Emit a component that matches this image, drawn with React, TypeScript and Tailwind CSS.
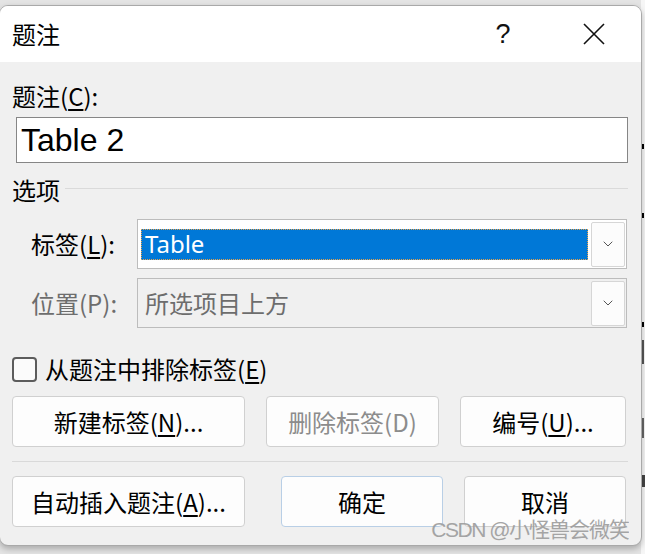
import { ChevronDown } from 'lucide-react';

const cjk = { fontFamily: '"Noto Sans CJK SC", "Noto Sans", sans-serif' };

function Btn({ children, w, disabled, primary }: { children: React.ReactNode; w: string; disabled?: boolean; primary?: boolean }) {
  return (
    <div
      className={`${w} h-[51px] flex items-center justify-center rounded-[4px] border bg-[#fdfdfd] text-[24px] leading-none ${
        primary ? 'border-[#b9cfe6]' : 'border-[#d0d0d0]'
      } ${disabled ? 'text-[#8c8c8c]' : 'text-black'}`}
    >
      {children}
    </div>
  );
}

function Combo({ disabled, children }: { disabled?: boolean; children: React.ReactNode }) {
  return (
    <div
      className={`w-[490px] h-[50px] flex items-center border border-[#bcbcbc] pl-[3px] pr-[1px] ${
        disabled ? 'bg-[#f0f0f0]' : 'bg-white'
      }`}
    >
      <div className="flex-1 h-full flex items-center">{children}</div>
      <div className="w-[34px] h-[45px] ml-[3px] flex items-center justify-center rounded-[2px] border border-[#d6d6d6] bg-[#fcfcfc]">
        <ChevronDown size={16} strokeWidth={1.5} className="text-[#555]" />
      </div>
    </div>
  );
}

export default function App() {
  return (
    <div className="relative w-[645px] h-[554px] overflow-hidden bg-[#e4e4e4]" style={cjk}>
      {/* backdrop fragments on the right */}
      <div className="absolute right-0 top-0 w-[4px] h-full bg-[#f6f6f6]" />
      <div className="absolute right-[1px] top-[144px] w-[3px] h-[5px] bg-black" />
      <div className="absolute right-[1px] top-[213px] w-[3px] h-[5px] bg-black" />
      <div className="absolute right-[1px] top-[322px] w-[3px] h-[5px] bg-black" />
      <div className="absolute right-[1px] top-[340px] w-[2px] h-[24px] bg-[#555]" />
      <div className="absolute right-[1px] top-[418px] w-[2px] h-[20px] bg-[#666]" />
      <div className="absolute right-[0px] top-[475px] w-[3px] h-[12px] bg-[#444]" />

      <div className="pt-[5px]">
        <div className="relative -ml-[1px] w-[643px] h-[541px] rounded-[9px] border border-[#a9a9a9] bg-[#f0f0f0] overflow-hidden shadow-[0_3px_6px_rgba(0,0,0,0.25)]">
          {/* title bar */}
          <div className="h-[56px] bg-white flex items-center pl-[12px] text-[24px] text-black">
            <span>题注</span>
            <span className="ml-auto w-[20px] text-center leading-none text-[27px] font-normal text-[#111]" style={{ fontFamily: '"Liberation Sans", Arial, sans-serif' }}>
              ?
            </span>
            <svg width="22" height="22" viewBox="0 0 22 22" className="ml-[70px] mr-[36px]">
              <path d="M1 1 L21 21 M21 1 L1 21" stroke="#111" strokeWidth="1.6" />
            </svg>
          </div>

          {/* body */}
          <div className="pl-[12px] pr-[13px] pt-[18px]">
            <div className="h-[32px] flex items-center text-[24px]">
              题注(<u className="underline-offset-[3px]">C</u>):
            </div>
            <div className="mt-[5px] ml-[4px] h-[46px] border border-[#868686] bg-white flex items-center pl-[4px] text-[32px] text-black" style={{ fontFamily: '"Liberation Sans", Arial, sans-serif' }}>
              Table 2
            </div>

            <div className="mt-[11px] h-[32px] flex items-center text-[24px]">
              <span>选项</span>
              <div className="flex-1 h-px bg-[#dadada] ml-[5px] mt-[-4px]" />
            </div>

            <div className="mt-[13px] flex items-center">
              <div className="w-[125px] pl-[19px] text-[24px]">
                标签(<u className="underline-offset-[3px]">L</u>):
              </div>
              <Combo>
                <div className="w-full h-[31px] bg-[#0078d7] border border-dotted border-[#e7a24c] flex items-center pl-[3px] text-[24px] text-white" style={{ fontFamily: '"Noto Sans", sans-serif' }}>
                  Table
                </div>
              </Combo>
            </div>

            <div className="mt-[9px] flex items-center">
              <div className="w-[125px] pl-[19px] text-[24px] text-[#6d6d6d]">位置(P):</div>
              <Combo disabled>
                <div className="pl-[4px] text-[24px] text-[#6d6d6d]">所选项目上方</div>
              </Combo>
            </div>

            <div className="mt-[25px] h-[32px] flex items-center text-[24px]">
              <div className="w-[25px] h-[25px] rounded-[4px] border-2 border-[#5c5c5c] bg-[#fbfbfb]" />
              <span className="ml-[8px]">
                从题注中排除标签(<u className="underline-offset-[3px]">E</u>)
              </span>
            </div>

            <div className="mt-[11px] flex">
              <Btn w="w-[233px]">
                新建标签(<u className="underline-offset-[3px]">N</u>)...
              </Btn>
              <div className="ml-[21px]">
                <Btn w="w-[173px]" disabled>
                  删除标签(D)
                </Btn>
              </div>
              <div className="ml-[21px]">
                <Btn w="w-[166px]">
                  编号(<u className="underline-offset-[3px]">U</u>)...
                </Btn>
              </div>
            </div>

            <div className="mt-[14px] h-px bg-[#d9d9d9]" />

            <div className="mt-[14px] flex">
              <Btn w="w-[233px]">
                自动插入题注(<u className="underline-offset-[3px]">A</u>)...
              </Btn>
              <div className="ml-[36px]">
                <Btn w="w-[162px]" primary>
                  确定
                </Btn>
              </div>
              <div className="ml-[21px]">
                <Btn w="w-[162px]">取消</Btn>
              </div>
            </div>
          </div>

          {/* watermark */}
          <div className="absolute right-[12px] bottom-[2px] text-[21px] leading-[26px] text-[#9c9c9c] opacity-90">
            <span className="tracking-[-1.5px]" style={{ fontFamily: '"Liberation Sans", Arial, sans-serif' }}>CSDN @</span>
            <span className="tracking-[-1px]">小怪兽会微笑</span>
          </div>
        </div>
      </div>
    </div>
  );
}
